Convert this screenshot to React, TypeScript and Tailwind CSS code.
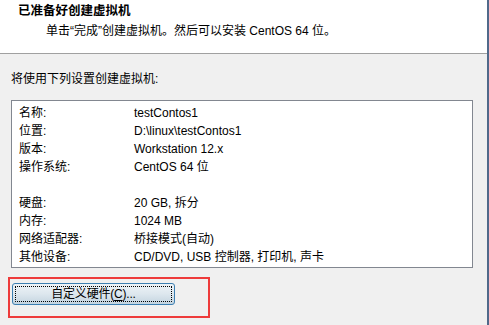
const rows: [string, string][] = [
  ["名称:", "testContos1"],
  ["位置:", "D:\\linux\\testContos1"],
  ["版本:", "Workstation 12.x"],
  ["操作系统:", "CentOS 64 位"],
  ["", ""],
  ["硬盘:", "20 GB, 拆分"],
  ["内存:", "1024 MB"],
  ["网络适配器:", "桥接模式(自动)"],
  ["其他设备:", "CD/DVD, USB 控制器, 打印机, 声卡"],
];

export default function App() {
  return (
    <div
      className="w-[489px] h-[325px] bg-[#f0f0f0] border-r-2 border-[#50698a] flex flex-col text-[12px] text-black overflow-hidden"
      style={{ fontFamily: '"Liberation Sans", "Noto Sans CJK SC", sans-serif' }}
    >
      {/* header */}
      <div className="h-[54px] shrink-0 bg-white border-b border-[#a0a0a0] pl-[18px] pt-[4px]">
        <div className="font-bold leading-[15px] text-[12.5px]">已准备好创建虚拟机</div>
        <div className="pl-[28px] leading-[18px] mt-[3px]">
          单击“完成”创建虚拟机。然后可以安装 CentOS 64 位。
        </div>
      </div>

      <div className="pl-[11px] pr-[14px]">
        <div className="mt-[16px] leading-[18px]">将使用下列设置创建虚拟机:</div>

        <div className="mt-[12px] h-[168px] bg-white border border-[#828790] pt-[3px] pl-[7px]">
          {rows.map(([k, v], i) => (
            <div key={i} className="flex h-[18px] items-center leading-[18px]">
              <div className="w-[115px] shrink-0">{k}</div>
              <div>{v}</div>
            </div>
          ))}
        </div>

        <div className="-ml-[3px] mt-[9px] w-[202px] h-[41px] border-2 border-[#ee3b3b] pl-[2px] pt-[4px]">
          <button className="relative w-[163px] h-[22px] rounded-[3px] border border-[#3c7fb1] bg-gradient-to-b from-[#eef3f7] via-[#dde7ee] to-[#c3d4e0] flex items-center justify-center">
            <span className="absolute inset-[2px] border border-dotted border-black rounded-[1px]" />
            <span className="leading-[16px] tracking-[-0.2px]">
              自定义硬件(<span className="underline underline-offset-2">C</span>)...
            </span>
          </button>
        </div>
      </div>
    </div>
  );
}
